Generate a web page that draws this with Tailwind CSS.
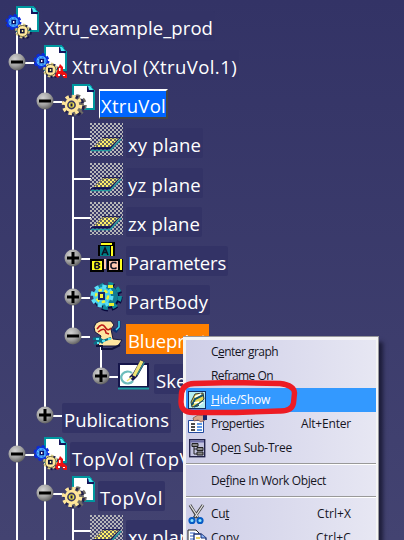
<!DOCTYPE html>
<html lang="en">
<head>
<meta charset="utf-8">
<title>Xtru_example_prod</title>
<script src="https://cdn.jsdelivr.net/npm/@tailwindcss/browser@4"></script>
</head>
<body class="relative h-[540px] w-[404px] overflow-hidden bg-linear-to-b from-[#333366] to-[#434371] font-['Open_Sans','Noto_Sans',sans-serif]">
<svg class="absolute h-0 w-0">
  <defs>
    <radialGradient id="ball" cx=".38" cy=".32" r=".75"><stop offset="0" stop-color="#d2d2d2"/><stop offset=".55" stop-color="#a2a2a2"/><stop offset="1" stop-color="#555"/></radialGradient>
    <pattern id="checker" width="4" height="4" patternUnits="userSpaceOnUse"><path d="M0 0h2v2h-2zM2 2h2v2h-2z" fill="#bcbcbc" opacity=".95"/></pattern>
    <pattern id="yellowDots" width="4" height="4" patternUnits="userSpaceOnUse"><rect width="4" height="4" fill="#fff06a"/><path d="M0 0h2v2h-2zM2 2h2v2h-2z" fill="#6a6a60"/></pattern>
    <g id="doc">
      <path d="M11 1h16l5 6v18H11z" fill="#fff" stroke="#00979f" stroke-width="2" shape-rendering="crispEdges"/>
      <path d="M25 2h2l4 5v2z" fill="#4de8f4"/><path d="M25 2v6h7v-2h-5V3z" fill="#14145a"/><path d="M26 2h2l3 4h-4z" fill="#4de8f4"/>
    </g>
    <g id="gears">
      <circle cx="7.5" cy="16" r="6.6" fill="none" stroke="#0a28e0" stroke-width="2.6" stroke-dasharray="3 2.2"/>
      <circle cx="7.5" cy="16" r="5.8" fill="#52b8ff" stroke="#0c32d8" stroke-width="1.6"/>
      <circle cx="7.5" cy="16" r="3.8" fill="none" stroke="#2a74f4" stroke-width="1.2" stroke-dasharray="2 1.5"/>
      <rect x="5.4" y="13.7" width="4.6" height="4.6" fill="#08106a"/><rect x="7" y="15" width="1.4" height="2" fill="#fff"/>
      <circle cx="18.5" cy="26" r="6.2" fill="none" stroke="#141446" stroke-width="2.2" stroke-dasharray="2.6 2.2"/>
      <circle cx="16.5" cy="25" r="6.2" fill="none" stroke="#d8cc88" stroke-width="2.4" stroke-dasharray="2.6 2.2"/>
      <circle cx="16.5" cy="25" r="5.5" fill="#ffe89c" stroke="#716b44" stroke-width="1"/>
      <rect x="14" y="22.8" width="4.6" height="4.6" fill="#0f1236"/><rect x="15.8" y="24" width="1.4" height="2" fill="#fff29a"/>
    </g>
  </defs>
</svg>

<main id="tree" class="flex flex-col pt-2"></main>

<nav class="absolute left-[183px] top-[336px] h-[220px] w-[196px] border-t border-r border-[#97979b] bg-[#f4f4f4] pt-[3px] pr-[2px] pl-[3px] shadow-[5px_5px_4px_-1px_rgba(10,10,30,0.65)]">
  <div id="menu" class="flex flex-col bg-linear-to-r from-[#cfcfe8] via-[#dadaed] to-[#e7e7f3] text-[12px] text-[#15151f]"></div>
</nav>

<svg class="absolute left-[174px] top-[376px]" width="128" height="44" viewBox="0 0 128 44" fill="none">
  <path d="M20 7.5L58 6.5 106 7.5Q120 9 120.500 17L119.500 27Q118 35.500 105 35L62 36.500 20 36.500Q7 37 7 26L7.500 17Q9 8 20 7.500Z" stroke="#ed1c24" stroke-width="5.4" stroke-linejoin="round"/>
</svg>

<script>
const icons = {
  product: '<path d="M11 24V42" stroke="#fff" stroke-width="2"/><use href="#doc"/><use href="#gears"/>',
  instance: '<path d="M11 24V42" stroke="#fff" stroke-width="2"/><use href="#doc"/><use href="#gears"/><path d="M21 31l5-12 3 3v4l4 3v4h-3l-3-4-3 4z" fill="#f01010"/><path d="M24 29h2v2h-2zM25 23h1.500v3h-1.500zM29 30h2v1h-2z" fill="#fff"/>',
  part: '<path d="M11 28V42" stroke="#fff" stroke-width="2"/><use href="#doc"/><circle cx="14" cy="21" r="8" fill="#706c66"/><circle cx="14" cy="21" r="9" fill="none" stroke="#706c66" stroke-width="3.500" stroke-dasharray="3.800 3.270"/><circle cx="12" cy="22" r="9.300" fill="none" stroke="#22204c" stroke-width="3" stroke-dasharray="3.800 3.500"/><circle cx="10" cy="21" r="8.600" fill="none" stroke="#ffe69a" stroke-width="3.400" stroke-dasharray="3.400 3.350"/><circle cx="10" cy="21" r="7.300" fill="#ffe69a"/><circle cx="9.500" cy="21" r="3.600" fill="#ece048" stroke="#3a3860" stroke-width="1.600"/><path d="M8.500 19.500h2v3h-2z" fill="#15154c"/>',
  plane: '<path d="M-16 16H1" stroke="#fff" stroke-width="2"/><rect y="0" width="33" height="33" fill="url(#checker)"/><path d="M3 25L13 15H30L21 26H3z" fill="#1a1a58"/><path d="M4 24L13 15H29L20 24z" fill="url(#yellowDots)"/><path d="M1 27.500H20L31 16" fill="none" stroke="#229a9e" stroke-width="1.500"/><path d="M1 25.800H20" stroke="#101052" stroke-width="1.500"/><path d="M12 14.700H31" stroke="#101052"/>',
  params: '<g transform="translate(0 1)"><g shape-rendering="crispEdges"><path d="M8 3h3V0h14v14H8zM0 17h14v13H0zM17 17h16v13H17z" fill="#000"/><path d="M10 4h10v10H10z" fill="#007f86"/><path d="M11 1h11v2H11zM21 4h2v10h-2z" fill="#ffff20"/><path d="M2 19h10v9H2z" fill="#ffff20"/><path d="M19 19h9v9h-9z" fill="#ffc8b0"/><path d="M30 17h2v11h-2z" fill="#ffff20"/><path d="M14 17h2v10h-2z" fill="#ffc8b0"/></g><g fill="none" stroke="#101020" stroke-width="1.600"><path d="M12 13L15 6l3 7M13 10.500h4M5 20.500v6M5 20.500h3l1.500 1.500-1.500 1.500H5M8 23.500l1.500 1.500L8 26.500H5M26.500 21.500l-1-1h-3l-1.500 1.500v3l1.500 1.500h3l1-1"/></g></g>',
  body: '<circle cx="18" cy="17" r="11.500" fill="#08083c"/><circle cx="18" cy="17" r="12.500" fill="none" stroke="#08083c" stroke-width="4" stroke-dasharray="6 3.800"/><circle cx="17" cy="16" r="11" fill="#117d94"/><circle cx="18" cy="16" r="12" fill="none" stroke="#118c9b" stroke-width="4" stroke-dasharray="5 4.400"/><circle cx="12" cy="16" r="9" fill="#44cbee"/><circle cx="12" cy="16" r="9.500" fill="none" stroke="#58def8" stroke-width="4" stroke-dasharray="4 3.460"/><circle cx="12" cy="16" r="6" fill="none" stroke="#f0f238" stroke-width="2.500" stroke-dasharray="3.500 2.500"/><path d="M18 5h5v3h-5zM20 11h3v3h-3zM19 23h5v3h-5z" fill="#e8f030"/><path d="M8 12h7v8H8z" fill="#16286e"/><path d="M10 14h3v4h-3z" fill="#fff240"/>',
  set: '<path d="M11 26V42" stroke="#fff" stroke-width="2"/><g transform="translate(1 1)"><path d="M3 7L5 3 9 1 20 1 23 5 20 9 22 19 31 20 27 26H7L10 16 4 12z" fill="#ffe5a0" stroke="#16163e" stroke-width="1"/><path d="M6 9q5-7 8-2t6 1M7 12q7-6 8 1l3 1" fill="none" stroke="#bc1717" stroke-width="1.500"/><path d="M2 19l6-1 4 3 8-3M3 24l5-4 4 3" fill="none" stroke="#086f87" stroke-width="2.400"/><path d="M5 19h3M11 21h3M17 19h3M6 23h2" stroke="#51e4f1" stroke-width="2"/><path d="M28 1v6l-3 4-3-2" fill="none" stroke="#0b3273" stroke-width="3"/><path d="M28 1v6l-3 3" fill="none" stroke="#40dcf1" stroke-width="1.500"/><path d="M5 26h6v3h10l8-4" fill="none" stroke="#11113a" stroke-width="2"/></g>',
  sketch: '<g transform="translate(-1 2)"><path d="M2 3H31V26H2z" fill="#fff" stroke="#15154a" stroke-width="2" shape-rendering="crispEdges"/><path d="M1 27.500H32" stroke="#219fa3" stroke-width="2"/><path d="M15 12A6.500 6 0 1 0 16 20" fill="none" stroke="#6cbcbc" stroke-width="2.200"/><path d="M26 0L18 14 14 18" fill="none" stroke="#15154a" stroke-width="5.500"/><path d="M25 0L17 15" fill="none" stroke="#f1e474" stroke-width="3.500"/><path d="M27.500 1L20 14" stroke="#35888c" stroke-width="1.500"/><path d="M10 20l5-4" stroke="#f5e976" stroke-width="1.500"/></g>'
};
// Guides: "|" runs through the row, "." stops at the toggle, " " leaves a gap.
const rows = [
  {t:'Xtru_example_prod', g:'', icon:'product', w:169, h:39},
  {t:'XtruVol (XtruVol.1)', g:'|', icon:'instance', s:'-', w:165, h:39},
  {t:'XtruVol', g:'||', icon:'part', s:'-', w:65, h:39, look:'blue'},
  {t:'xy plane', g:'|||', icon:'plane', w:73, h:40},
  {t:'yz plane', g:'|||', icon:'plane', w:73, h:39},
  {t:'zx plane', g:'|||', icon:'plane', w:72, h:39},
  {t:'Parameters', g:'|||', icon:'params', s:'+', w:98, h:39},
  {t:'PartBody', g:'|||', icon:'body', s:'+', w:80, h:39},
  {t:'Blueprint', g:'||.', icon:'set', s:'-', w:79, h:40, look:'orange'},
  {t:'Sketch.1', g:'|| .', icon:'sketch', s:'+', w:73, h:39},
  {t:'Publications', g:'|.', s:'+', w:105, h:39},
  {t:'TopVol (TopVol.1)', g:'|', icon:'instance', s:'-', w:158, h:39},
  {t:'TopVol', g:'||', icon:'part', s:'-', w:63, h:39},
  {t:'xy plane', g:'|||', icon:'plane', w:73, h:40}
];
const looks = {
  plain: 'mt-[3px] ml-[3px] h-[30px] px-[2px] leading-[33px] bg-[#333366] rounded-[2px]',
  blue: 'mt-[3px] ml-[4px] h-[30px] w-[69px] px-[1px] leading-[30px] bg-[#0066ff] border-t-2 border-l border-r-2 border-b-2 border-t-white border-l-white border-r-[#444] border-b-[#444]',
  orange: 'mt-[3px] ml-[3px] h-[30px] px-[2px] leading-[33px] bg-[#ff8000]'
};
document.getElementById('tree').innerHTML = rows.map(r => {
  const guides = [...r.g].map((c, i) => {
    const last = i === r.g.length - 1 && r.s;
    const line = c === '|' ? '<i class="block h-full w-[2px] bg-white"></i>' : c === '.' ? '<i class="block h-[15px] w-[2px] bg-white"></i>' : '';
    const toggle = last ? `<svg class="absolute left-[5px] top-[6px] overflow-visible" width="18" height="18"><path d="M17 10h9" stroke="#fff" stroke-width="2"/><circle cx="9" cy="9" r="8.500" fill="url(#ball)"/><path d="${r.s === '+' ? 'M3 9h12M9 3v12' : 'M3 9h12'}" stroke="#000" stroke-width="3"/></svg>` : '';
    return `<span class="relative flex w-7 justify-center">${line}${toggle}</span>`;
  }).join('');
  const icon = r.icon ? `<svg class="relative -mt-[2px] ml-[3px] shrink-0 overflow-visible" width="33" height="33">${icons[r.icon]}</svg>` : '';
  return `<div class="${r.h === 40 ? 'h-[40px]' : 'h-[39px]'} flex shrink-0 pl-[3px]">${guides}${icon}<span class="${looks[r.look || 'plain']} shrink-0 whitespace-nowrap text-[18.5px] text-white"><span data-w="${r.w}">${r.t}</span></span></div>`;
}).join('');

const glyphs = {
  show: '<rect x=".5" y=".5" width="17" height="17" fill="#b4eef0" stroke="#102d68"/><path d="M3 11l4-8 8-1 1 6-6 7-6 1z" fill="#e8d954" stroke="#333"/><path d="M4 14l3-6 8-4M6 16l9-6" fill="none" stroke="#14536b" stroke-width="2"/><path d="M7 6l6-3M6 12l5-1M11 14l4-3" stroke="#fff" stroke-width="1.500"/>',
  props: '<path d="M.500 5.500h15v12h-15z" fill="#fff" stroke="#244a9c"/><path d="M3 9h4M3 12h4M3 15h4" stroke="#111" stroke-width="1.500"/><path d="M9 9h5M9 12h5M9 15h5" stroke="#2d78dc" stroke-width="1.500"/><path d="M5 3l5-3 7 1v4l-4 2-3-2-4 1z" fill="#d9a58a" stroke="#744b40" stroke-width=".7"/><path d="M15 0h4v5h-4z" fill="#17256c"/>',
  sub: '<rect x="1.700" y=".7" width="15" height="17" fill="#c2c2df" stroke="#23234a" stroke-width="1.400"/><path d="M2 2.500h14" stroke="#6d6da6" stroke-width="2"/><path d="M6 6v9h3M6 10h3" fill="none" stroke="#222"/><path d="M4 4.500h6v3H4zM9 8.500h6v3H9zM9 13h6v3H9z" fill="#888" stroke="#222"/>',
  cut: '<path d="M2 0l8 13M15 0L6 13" stroke="#444" stroke-width="3"/><path d="M2 0l8 12M15 0L7 12" stroke="#e5e5e5" stroke-width="1.200"/><circle cx="4" cy="15.500" r="2.600" fill="#8ce4ff" stroke="#075bc4" stroke-width="2"/><circle cx="12" cy="15.500" r="2.600" fill="#8ce4ff" stroke="#075bc4" stroke-width="2"/>',
  copy: '<path d="M0 1h8l3 3v12H0z" fill="#fff" stroke="#222"/><path d="M2 4h5M2 7h7M2 10h7" stroke="#3261c5"/><path d="M6 5h7l5 4v12H6z" fill="#fff" stroke="#172f72" stroke-width="1.300"/><path d="M8 9h4M8 12h8M8 15h8" stroke="#e1c22d" stroke-width="1.300"/><path d="M13 5v4h5" fill="#8ab8ff" stroke="#172f72"/>'
};
const items = [
  ['C<u>e</u>nter graph',67], ['Reframe On',62], ['<u>H</u>ide/Show',59,'show'], ['Pr<u>o</u>perties',53,'props','Alt+Enter',50], ['Ope<u>n</u> Sub-Tree',81,'sub'], null,
  ['De<u>f</u>ine In Work Object',115], null, ['Cu<u>t</u>',18,'cut','Ctrl+X',34], ['<u>C</u>opy',28,'copy','Ctrl+C',35]
];
document.getElementById('menu').innerHTML = items.map(m => m ? `<div class="${m[2] === 'show' ? 'bg-[#3399ff] text-white' : ''} flex h-6 shrink-0 items-center pr-[25px] pl-[2px] whitespace-nowrap"><svg class="mr-[5px] w-[18px] shrink-0 overflow-visible" height="18">${glyphs[m[2]] || ''}</svg><span class="-mt-px leading-4" data-w="${m[1]}">${m[0]}</span>${m[3] ? `<span class="-mt-px ml-auto leading-4" data-w="${m[4]}">${m[3]}</span>` : ''}</div>` : '<div class="mt-[3px] mb-[4px] h-[2px] shrink-0 border-t border-t-[#999] bg-white"></div>').join('');

function fit() {
  document.querySelectorAll('[data-w]').forEach(e => {
    e.style.letterSpacing = '0px';
    const gap = (e.dataset.w - e.getBoundingClientRect().width) / e.textContent.length;
    e.style.letterSpacing = Math.max(-1, Math.min(1, gap)) + 'px';
  });
}
window.addEventListener('load', () => {
  fit();
  document.fonts.ready.then(fit);
  requestAnimationFrame(fit);
  setTimeout(fit, 60);
});
</script>
</body>
</html>
